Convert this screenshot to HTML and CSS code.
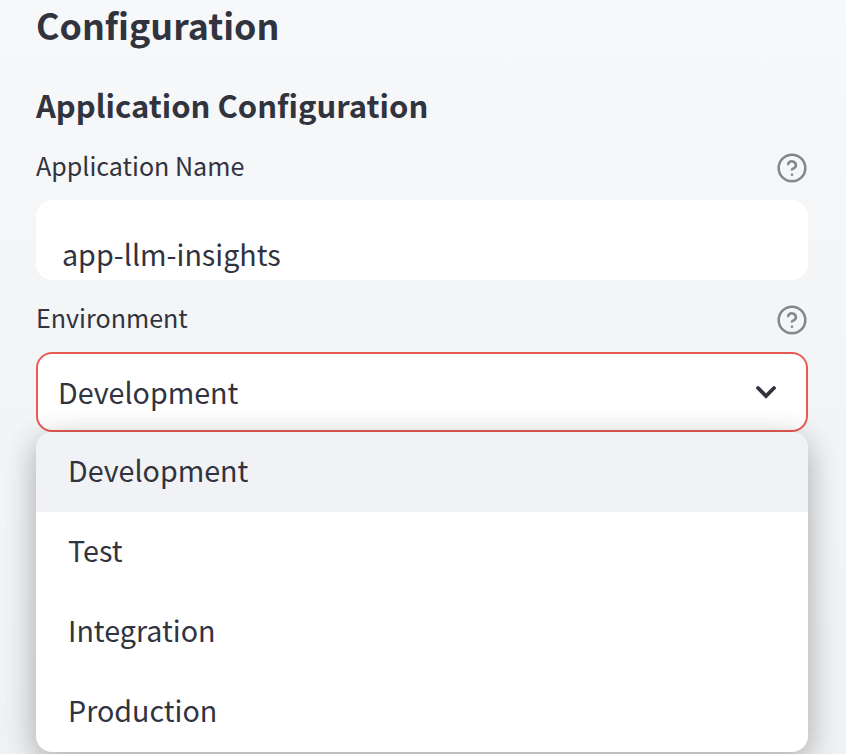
FILE: index.html
```html
<!DOCTYPE html>
<html lang="en">
<head>
<meta charset="utf-8">
<title>Configuration</title>
<link rel="stylesheet" href="styles.css">
</head>
<body>
<main class="sidebar">
  <h1 class="title">Configuration</h1>
  <h2 class="section-title">Application Configuration</h2>
  <div class="label-row">
    <span class="label">Application Name</span>
    <svg class="help" viewBox="0 0 24 24"><circle cx="12" cy="12" r="10"/><path d="M9.09 9a3 3 0 0 1 5.83 1c0 2-3 3-3 3"/><path d="M12 17h.01"/></svg>
  </div>
  <div class="input"><span class="input-text">app-llm-insights</span></div>
  <div class="label-row label-row-env">
    <span class="label">Environment</span>
    <svg class="help" viewBox="0 0 24 24"><circle cx="12" cy="12" r="10"/><path d="M9.09 9a3 3 0 0 1 5.83 1c0 2-3 3-3 3"/><path d="M12 17h.01"/></svg>
  </div>
  <div class="select">
    <span class="select-value">Development</span>
    <svg class="chevron" viewBox="0 0 22 14"><path d="M3 3l8 8 8-8"/></svg>
  </div>
  <ul class="menu">
    <li class="option selected">Development</li>
    <li class="option">Test</li>
    <li class="option">Integration</li>
    <li class="option">Production</li>
  </ul>
</main>
</body>
</html>
```
FILE: styles.css
```css
* { box-sizing: border-box; }
html, body { margin: 0; height: 754px; overflow: hidden; }
body {
  background: linear-gradient(#f7f8fa, #f0f1f3);
  color: #31333f;
  font-family: "Noto Sans CJK SC", "Open Sans", sans-serif;
}
.sidebar { padding: 0 38px 0 36px; }
.title { margin: 0; height: 54px; line-height: 49px; font-size: 35.8px; font-weight: 700; }
.section-title { margin: 26px 0 0; height: 54px; line-height: 50px; font-size: 31px; font-weight: 700; }
.label-row { display: flex; justify-content: space-between; align-items: center; height: 40px; margin-top: 14px; }
.label-row-env { margin-top: 20px; }
.label { height: 40px; font-size: 25.07px; line-height: 35px; }
.help { width: 32px; height: 32px; fill: none; stroke: #84868d; stroke-width: 1.9; stroke-linecap: round; stroke-linejoin: round; }
.input { height: 80px; margin-top: 12px; padding: 30px 26px 0; background: #fff; border-radius: 16px; }
.input-text { display: block; font-size: 28.65px; line-height: 48px; }
.select { display: flex; align-items: center; justify-content: space-between; height: 80px; margin-top: 12px; padding: 0 29px 0 20px; border: 2px solid #ea5a55; border-radius: 16px; background: #fff; }
.select-value { font-size: 28.65px; line-height: 48px; }
.chevron { width: 22px; height: 14px; fill: none; stroke: #31333f; stroke-width: 3.8; stroke-linecap: round; }
.menu { margin: 0; padding: 0; list-style: none; background: #fff; border-radius: 16px; overflow: hidden; box-shadow: 0 8px 32px rgba(0,0,0,.16), 0 8px 32px rgba(0,0,0,.16); }
.option { height: 80px; padding: 0 32px; line-height: 75px; font-size: 28.65px; }
.selected { background: #f0f2f6; }
```
